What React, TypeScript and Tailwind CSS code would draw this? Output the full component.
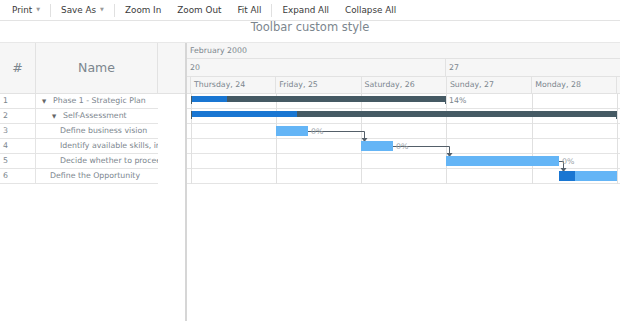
import React from 'react';

const FONT = { fontFamily: '"DejaVu Sans", "Liberation Sans", sans-serif' };

const toolbarItems: { label: string; caret?: boolean; sepAfter?: boolean }[] = [
  { label: 'Print', caret: true, sepAfter: true },
  { label: 'Save As', caret: true, sepAfter: true },
  { label: 'Zoom In' },
  { label: 'Zoom Out' },
  { label: 'Fit All', sepAfter: true },
  { label: 'Expand All' },
  { label: 'Collapse All' },
];

const rows = [
  { n: 1, name: 'Phase 1 - Strategic Plan', indent: 42, toggle: true },
  { n: 2, name: 'Self-Assessment', indent: 52, toggle: true },
  { n: 3, name: 'Define business vision', indent: 60 },
  { n: 4, name: 'Identify available skills, information and support', indent: 60 },
  { n: 5, name: 'Decide whether to proceed', indent: 60 },
  { n: 6, name: 'Define the Opportunity', indent: 50 },
];

const days = ['Thursday, 24', 'Friday, 25', 'Saturday, 26', 'Sunday, 27', 'Monday, 28', 'Tuesday, 29'];

const Toolbar = () => (
  <div className="flex h-[21px] items-center border-b border-[#e3e3e3] bg-white pl-[4px] text-[8.8px] text-[#3a3a3a]">
    {toolbarItems.map((it) => (
      <React.Fragment key={it.label}>
        <div className="flex items-center px-[8px] leading-none">
          <span>{it.label}</span>
          {it.caret && <span className="ml-[4px] text-[5px] text-[#9a9a9a]">▼</span>}
        </div>
        {it.sepAfter && <div className="mx-[2px] h-[13px] w-px bg-[#e0e0e0]" />}
      </React.Fragment>
    ))}
  </div>
);

const DataGrid = () => (
  <div className="flex w-[185px] shrink-0 flex-col bg-white">
    {/* header */}
    <div className="flex h-[51px] border-b border-[#e2e2e2] bg-[#f6f6f6] text-[12.5px] text-[#7c868e]">
      <div className="flex w-[36px] items-center justify-center border-r border-[#e2e2e2]">#</div>
      <div className="flex w-[122px] items-center justify-center border-r border-[#e2e2e2]">Name</div>
      <div className="flex-1" />
    </div>
    {rows.map((r) => (
      <div key={r.n} className="flex h-[15px] text-[7.8px] text-[#7c868e]">
        <div className="flex w-[158px] border-b border-[#e4e4e4]">
          <div className="flex w-[36px] items-center border-r border-[#e4e4e4] pl-[3px]">{r.n}</div>
          <div className="relative flex flex-1 items-center overflow-hidden whitespace-nowrap">
            {r.toggle && (
              <span className="absolute text-[5.5px] text-[#666]" style={{ left: r.indent - 36 }}>
                ▼
              </span>
            )}
            <span className="absolute" style={{ left: r.indent - 36 + (r.toggle ? 11 : 0) }}>
              {r.name}
            </span>
          </div>
        </div>
      </div>
    ))}
  </div>
);

const dayX = [4, 89, 174, 259, 345, 430];

const Timeline = () => (
  <div className="flex min-w-0 flex-1 flex-col">
    <div className="flex h-[51px] flex-col border-b border-[#e2e2e2] bg-[#f6f6f6] text-[7.8px] text-[#7c868e]">
      <div className="flex h-[16px] items-center border-b border-[#e2e2e2] pl-[3px]">February 2000</div>
      <div className="flex h-[18px] border-b border-[#e2e2e2]">
        <div className="flex w-[259px] items-center border-r border-[#e2e2e2] pl-[3px]">20</div>
        <div className="flex flex-1 items-center pl-[3px]">27</div>
      </div>
      <div className="flex flex-1 overflow-hidden whitespace-nowrap">
        <div className="w-[4px] shrink-0 border-r border-[#e2e2e2]" />
        {days.map((d) => (
          <div key={d} className="flex w-[85.3px] shrink-0 items-center border-r border-[#e2e2e2] pl-[3px]">
            {d}
          </div>
        ))}
      </div>
    </div>
    <svg width="433" height="91" className="block" style={FONT}>
      {[15, 30, 45, 60, 75, 90].map((y) => (
        <line key={y} x1="0" x2="433" y1={y - 0.5} y2={y - 0.5} stroke="#e4e4e4" />
      ))}
      {dayX.map((x) => (
        <line key={x} x1={x + 0.5} x2={x + 0.5} y1="0" y2="90" stroke="#e0e0e0" />
      ))}
      {/* parent bars */}
      <rect x="4" y="2" width="255" height="6" fill="#455a64" />
      <rect x="4" y="2" width="36" height="6" fill="#1976d2" />
      <rect x="4" y="2" width="1" height="8" fill="#455a64" />
      <rect x="258" y="2" width="1" height="8" fill="#455a64" />
      <text x="262" y="8.5" fontSize="7.8" fill="#7c868e">14%</text>
      <rect x="4" y="17" width="426" height="6" fill="#455a64" />
      <rect x="4" y="17" width="106" height="6" fill="#1976d2" />
      <rect x="4" y="17" width="1" height="8" fill="#455a64" />
      <rect x="429" y="17" width="1" height="8" fill="#455a64" />
      {/* connectors */}
      <g stroke="#545f69" strokeWidth="1" fill="none">
        <polyline points="121,37.5 177.5,37.5 177.5,45" />
        <polyline points="206,52.5 262.5,52.5 262.5,60" />
        <polyline points="372,67.5 376.5,67.5 376.5,75" />
      </g>
      <g fill="#545f69">
        <polygon points="174.5,44 180.5,44 177.5,48" />
        <polygon points="259.5,59 265.5,59 262.5,63" />
        <polygon points="373.5,74 379.5,74 376.5,78" />
      </g>
      {/* tasks */}
      <rect x="89" y="32" width="32" height="10" fill="#64b5f6" />
      <text x="124" y="40" fontSize="7.8" fill="#9aa2a8">0%</text>
      <rect x="174" y="47" width="32" height="10" fill="#64b5f6" />
      <text x="209" y="55" fontSize="7.8" fill="#9aa2a8">0%</text>
      <rect x="259" y="62" width="113" height="10" fill="#64b5f6" />
      <text x="375" y="70" fontSize="7.8" fill="#9aa2a8">0%</text>
      <rect x="372" y="77" width="58" height="10" fill="#64b5f6" />
      <rect x="372" y="77" width="16" height="10" fill="#1976d2" />
    </svg>
  </div>
);

export default function App() {
  return (
    <div className="flex h-[321px] w-[620px] flex-col overflow-hidden bg-white" style={FONT}>
      <Toolbar />
      <div className="flex h-[21px] items-start justify-center text-[11.5px] leading-[13px] text-[#7c868e]">
        Toolbar custom style
      </div>
      <div className="flex flex-1 border-t border-[#e8e8e8] bg-white">
        <DataGrid />
        <div className="w-[2px] shrink-0 bg-[#d6d6d6]" />
        <Timeline />
      </div>
    </div>
  );
}
